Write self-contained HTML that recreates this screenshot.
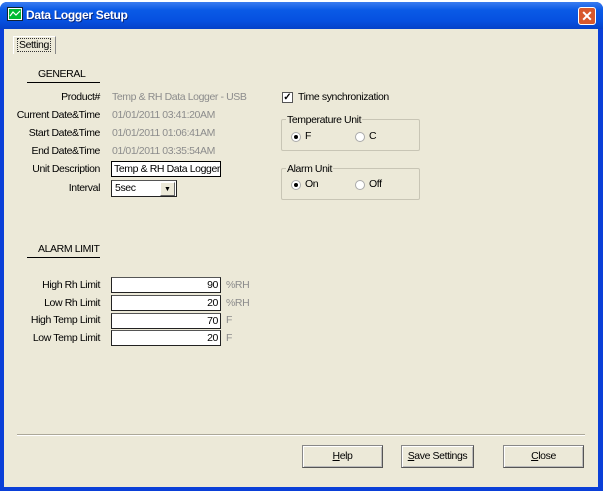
<!DOCTYPE html>
<html><head><style>
*{margin:0;padding:0;box-sizing:border-box}
body{width:605px;height:494px;background:#fff;font-family:"Liberation Sans",sans-serif;font-size:10.5px;letter-spacing:-0.4px;position:relative;overflow:hidden;color:#000}
.a{position:absolute;white-space:nowrap}
#win{position:absolute;left:0;top:2px;width:603px;height:489px;background:#0a3fd8;border-radius:7px 7px 0 0}
#title{position:absolute;left:0;top:0;width:603px;height:27px;border-radius:7px 7px 0 0;background:linear-gradient(#3b7cf0,#0a5ae6 30%,#0650e0 70%,#0541c8)}
#client{position:absolute;left:4px;top:27px;width:594px;height:458px;background:#ECE9D8}
.lbl{position:absolute;right:505px;white-space:nowrap}
.val{position:absolute;left:112px;color:#8c8c8c;white-space:nowrap}
.inp{position:absolute;left:111px;width:110px;height:16px;background:#fff;border:1px solid #222;border-top-color:#555;padding:1px 3px;white-space:nowrap;overflow:hidden}
.num{text-align:right;padding-right:2px}
.unit{position:absolute;left:226px;color:#8c8c8c}
.grp{position:absolute;left:281px;width:139px;height:32px;border:1px solid #c8c5b5;border-radius:2px}
.gl{position:absolute;left:286px;background:#ECE9D8;padding:0 1px}
.rad{position:absolute;width:10px;height:10px;border-radius:50%;background:#fff;border:1px solid #aaa}
.rad.on::after{content:"";position:absolute;left:2px;top:2px;width:4px;height:4px;border-radius:50%;background:#000}
.btn{position:absolute;top:445px;height:23px;border:1px solid #888;border-right-color:#555;border-bottom-color:#555;box-shadow:inset 1px 1px #fff,inset -1px -1px #bbb;background:#ECE9D8;text-align:center;line-height:21px}
</style></head><body>
<div id="win">
<div id="title">
<div class="a" style="left:8px;top:6px;width:14px;height:12px;background:#0b3;border:1px solid #fff;box-shadow:0 0 0 1px #123"><svg width="12" height="10"><path d="M1 7 L4 3 L7 6 L11 2" stroke="#fff" fill="none" stroke-width="1.2"/></svg></div>
<div class="a" style="left:26px;top:6px;color:#fff;font-weight:bold;font-size:12px;letter-spacing:-0.3px;text-shadow:1px 1px #0a2a80">Data Logger Setup</div>
<div class="a" style="left:578px;top:5px;width:18px;height:18px;background:#d8582c;border:1px solid #fff;border-radius:3px;color:#fff;font-weight:bold;font-size:14px;line-height:16px;text-align:center;letter-spacing:0">✕</div>
</div>
</div>
<div id="client" style="left:4px;top:29px"></div>
<div class="a" style="left:13px;top:36px;width:43px;height:18px;border:1px solid #fff;border-right:1px solid #888;border-bottom:none;background:#ECE9D8"></div>
<div class="a" style="left:17px;top:38px;border:1px dotted #333;padding:0 1px">Setting</div>
<div class="a" style="left:38px;top:68px">GENERAL</div>
<div class="a" style="left:27px;top:82px;width:73px;border-top:1px solid #000"></div>
<div class="lbl" style="top:91px">Product#</div><div class="val" style="top:91px">Temp &amp; RH Data Logger - USB</div>
<div class="lbl" style="top:109px">Current Date&amp;Time</div><div class="val" style="top:109px">01/01/2011 03:41:20AM</div>
<div class="lbl" style="top:127px">Start Date&amp;Time</div><div class="val" style="top:127px">01/01/2011 01:06:41AM</div>
<div class="lbl" style="top:145px">End Date&amp;Time</div><div class="val" style="top:145px">01/01/2011 03:35:54AM</div>
<div class="lbl" style="top:163px">Unit Description</div>
<div class="inp" style="top:161px;border:1px solid #000;padding-left:2px">Temp &amp; RH Data Logger</div>
<div class="lbl" style="top:182px">Interval</div>
<div class="inp" style="top:180px;width:66px;height:17px">5sec</div>
<div class="a" style="left:160px;top:182px;width:15px;height:14px;background:#ECE9D8;border:1px solid #fff;border-right-color:#666;border-bottom-color:#666;font-size:7px;text-align:center;line-height:13px;letter-spacing:0">▼</div>
<div class="a" style="left:282px;top:92px;width:11px;height:11px;background:#fff;border:1px solid #555;font-size:10px;line-height:9px;text-align:center;font-weight:bold;letter-spacing:0">✓</div>
<div class="a" style="left:298px;top:91px">Time synchronization</div>
<div class="grp" style="top:119px"></div><div class="gl" style="top:114px">Temperature Unit</div>
<div class="rad on" style="left:291px;top:132px"></div><div class="a" style="left:305px;top:130px">F</div>
<div class="rad" style="left:355px;top:132px"></div><div class="a" style="left:369px;top:130px">C</div>
<div class="grp" style="top:168px"></div><div class="gl" style="top:163px">Alarm Unit</div>
<div class="rad on" style="left:291px;top:180px"></div><div class="a" style="left:305px;top:178px">On</div>
<div class="rad" style="left:355px;top:180px"></div><div class="a" style="left:369px;top:178px">Off</div>
<div class="a" style="left:38px;top:243px">ALARM LIMIT</div>
<div class="a" style="left:27px;top:257px;width:73px;border-top:1px solid #000"></div>
<div class="lbl" style="top:279px">High Rh Limit</div><div class="inp num" style="top:277px">90</div><div class="unit" style="top:279px">%RH</div>
<div class="lbl" style="top:297px">Low Rh Limit</div><div class="inp num" style="top:295px">20</div><div class="unit" style="top:297px">%RH</div>
<div class="lbl" style="top:314px">High Temp Limit</div><div class="inp num" style="top:313px">70</div><div class="unit" style="top:314px">F</div>
<div class="lbl" style="top:332px">Low Temp Limit</div><div class="inp num" style="top:330px">20</div><div class="unit" style="top:332px">F</div>
<div class="a" style="left:17px;top:434px;width:568px;border-top:1px solid #aca899;border-bottom:1px solid #fff"></div>
<div class="btn" style="left:302px;width:81px"><u>H</u>elp</div>
<div class="btn" style="left:401px;width:73px"><u>S</u>ave Settings</div>
<div class="btn" style="left:503px;width:81px"><u>C</u>lose</div>
</body></html>
